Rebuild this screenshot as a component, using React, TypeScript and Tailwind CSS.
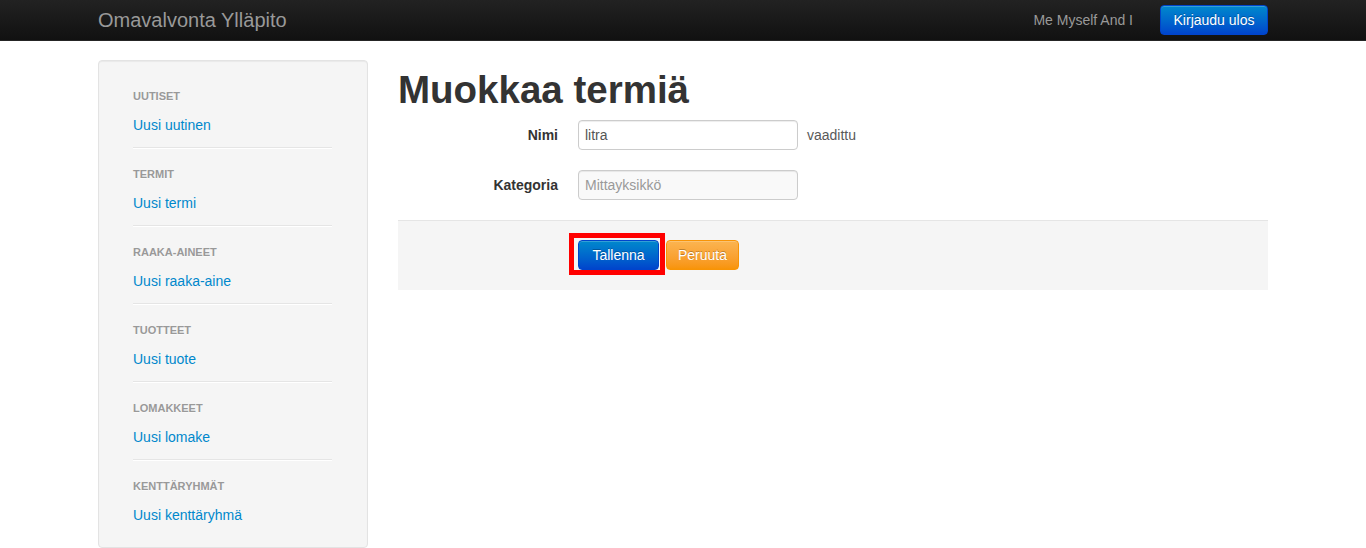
import React from 'react';

const SECTIONS = [
  { header: 'Uutiset', link: 'Uusi uutinen' },
  { header: 'Termit', link: 'Uusi termi' },
  { header: 'Raaka-aineet', link: 'Uusi raaka-aine' },
  { header: 'Tuotteet', link: 'Uusi tuote' },
  { header: 'Lomakkeet', link: 'Uusi lomake' },
  { header: 'Kenttäryhmät', link: 'Uusi kenttäryhmä' },
];

export default function App() {
  return (
    <div className="min-h-[548px] bg-white font-['Liberation_Sans',Arial,sans-serif] text-[14px] text-[#333]">
      {/* top navbar */}
      <div className="h-[41px] border-b border-[#252525] bg-gradient-to-b from-[#222222] to-[#111111]">
        <div className="mx-auto flex h-[40px] w-[1170px] items-center">
          <span className="text-[20px] leading-[20px] text-[#999]">Omavalvonta Ylläpito</span>
          <span className="ml-auto text-[14px] text-[#999]">Me Myself And I</span>
          <button className="ml-[27px] h-[30px] w-[108px] rounded-[4px] border border-[#0044cc] bg-gradient-to-b from-[#0088cc] to-[#0044cc] text-[14px] text-white shadow-[inset_0_1px_0_rgba(255,255,255,0.2)] [text-shadow:0_-1px_0_rgba(0,0,0,0.25)]">
            Kirjaudu ulos
          </button>
        </div>
      </div>

      <div className="mx-auto mt-[19px] flex w-[1170px] gap-[30px]">
        {/* sidebar */}
        <div className="w-[270px] shrink-0 rounded-[4px] border border-[#e3e3e3] bg-[#f5f5f5] pb-[22px] pl-[34px] pr-[35px] pt-[25px] shadow-[inset_0_1px_1px_rgba(0,0,0,0.05)]">
          {SECTIONS.map((s, i) => (
            <div key={s.header} className={i > 0 ? 'mt-[15px]' : ''}>
              <div className="h-[20px] text-[11px] font-bold uppercase leading-[20px] text-[#999] [text-shadow:0_1px_0_rgba(255,255,255,0.5)]">
                {s.header}
              </div>
              <div className="mt-[9px] h-[20px] leading-[20px] text-[#0088cc]">{s.link}</div>
              {i < SECTIONS.length - 1 && (
                <div className="mt-[12px] h-[2px] border-b border-white bg-[#e5e5e5]" />
              )}
            </div>
          ))}
        </div>

        {/* main content */}
        <div className="flex-1">
          <h1 className="mt-[10px] text-[38.5px] font-bold leading-[40px] text-[#333]">Muokkaa termiä</h1>

          <div className="mt-[10px] flex items-center">
            <label className="w-[160px] text-right font-bold">Nimi</label>
            <div className="ml-[20px] flex h-[30px] w-[220px] items-center rounded-[4px] border border-[#ccc] bg-white px-[6px] text-[#555] shadow-[inset_0_1px_1px_rgba(0,0,0,0.075)]">
              litra
            </div>
            <span className="ml-[9px] text-[#595959]">vaadittu</span>
          </div>

          <div className="mt-[20px] flex items-center">
            <label className="w-[160px] text-right font-bold">Kategoria</label>
            <div className="ml-[20px] flex h-[30px] w-[220px] items-center rounded-[4px] border border-[#ccc] bg-[#f9f9f9] px-[6px] text-[#999] shadow-[inset_0_1px_1px_rgba(0,0,0,0.075)]">
              Mittayksikkö
            </div>
          </div>

          <div className="mt-[20px] flex h-[70px] items-start gap-[7px] border-t border-[#e5e5e5] bg-[#f5f5f5] pl-[180px] pt-[19px]">
            <div className="relative">
              <button className="h-[30px] w-[81px] rounded-[4px] border border-[#0044cc] bg-gradient-to-b from-[#0088cc] to-[#0044cc] text-[14px] text-white shadow-[inset_0_1px_0_rgba(255,255,255,0.2)] [text-shadow:0_-1px_0_rgba(0,0,0,0.25)]">
                Tallenna
              </button>
              <div className="pointer-events-none absolute left-[-9px] top-[-7px] h-[42px] w-[96px] border-[5px] border-[#ff0000]" />
            </div>
            <button className="h-[30px] w-[73px] rounded-[4px] border border-[#f89406] bg-gradient-to-b from-[#fbb450] to-[#f89406] text-[14px] text-white shadow-[inset_0_1px_0_rgba(255,255,255,0.2)] [text-shadow:0_-1px_0_rgba(0,0,0,0.25)]">
              Peruuta
            </button>
          </div>
        </div>
      </div>
    </div>
  );
}
